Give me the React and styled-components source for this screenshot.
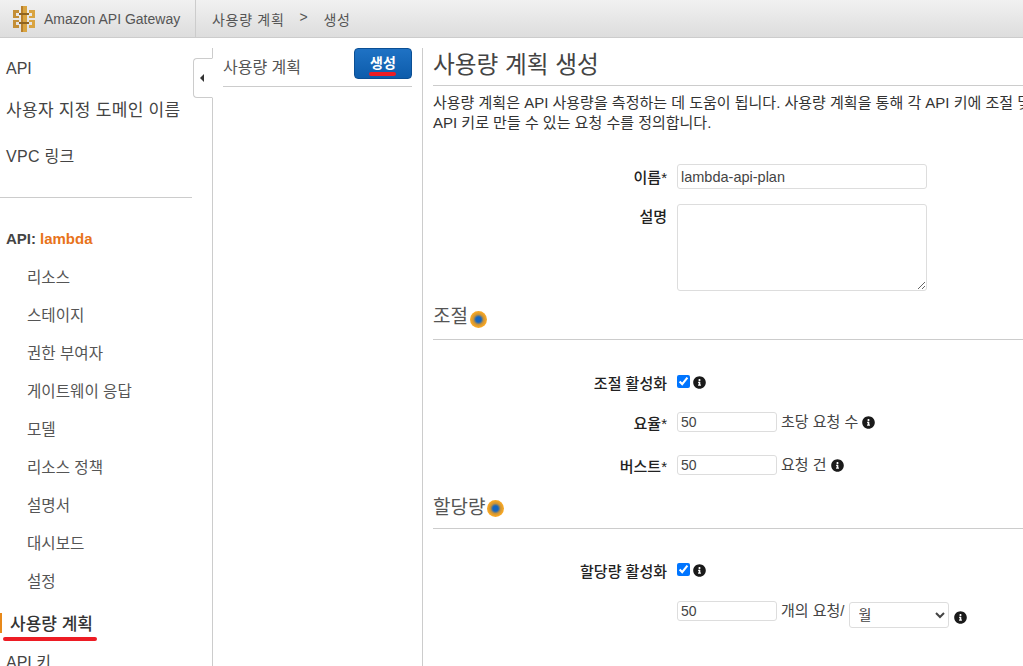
import styled, { createGlobalStyle } from 'styled-components'
import { FaInfoCircle } from 'react-icons/fa'

const GlobalStyle = createGlobalStyle`
html, body {
  margin:0;
  padding:0;
  height:100%;
  overflow:hidden;
  background:#fff;
}
body {
  font-family:"Liberation Sans", "Noto Sans CJK KR", sans-serif;
  color:#444;
}
* { box-sizing:border-box; }
`
const Page = styled.div`
width:1023px;
height:666px;
display:flex;
flex-direction:column;
overflow:hidden;
`
const TopBar = styled.header`
height:38px;
flex:none;
display:flex;
align-items:center;
background:linear-gradient(#f1f1f1, #dddddd);
border-bottom:1px solid #cccccc;
`
const Brand = styled.div`
width:196px;
height:37px;
padding-left:12px;
display:flex;
align-items:center;
gap:8px;
font-size:14px;
color:#555;
border-right:1px solid #cccccc;
`
const Crumbs = styled.div`
padding-left:16px;
display:flex;
gap:15px;
font-size:14px;
letter-spacing:.7px;
color:#555;
`
const Content = styled.div`
flex:1;
display:flex;
padding-top:10px;
min-height:0;
`
const Sidebar = styled.nav`
width:213px;
flex:none;
position:relative;
border-right:1px solid #cccccc;
`
const TopItem = styled.div`
height:${p => p.$h}px;
padding-left:6px;
padding-top:${p => p.$pt || 0}px;
padding-bottom:${p => p.$pb || 0}px;
display:flex;
align-items:center;
font-size:${p => p.$size || 17}px;
letter-spacing:${p => p.$ls || 0}px;
color:#444;
`
const SideRule = styled.hr`
width:192px;
margin:17px 0 21px 0;
border:0;
border-top:1px solid #cccccc;
`
const ApiTitle = styled.div`
height:39px;
padding-left:6px;
display:flex;
align-items:center;
gap:4px;
font-size:15px;
font-weight:bold;
color:#444;
`
const ApiName = styled.span`
color:#e8731a;
`
const SubItem = styled.div`
height:38px;
padding:0 0 2px 27px;
display:flex;
align-items:center;
font-size:15.6px;
color:#555;
`
const ActiveItem = styled.div`
height:38px;
margin-top:4px;
padding:0 0 1px 10px;
display:flex;
align-items:center;
position:relative;
font-size:17px;
font-weight:500;
color:#333;
&:before{
  content:"";
  position:absolute;
  left:0;
  top:9px;
  width:2px;
  height:20px;
  background:#e8891a;
}
`
const RedMark = styled.span`
position:absolute;
left:${p => p.$left}px;
top:${p => p.$top}px;
width:${p => p.$width}px;
height:4px;
border-radius:2px;
background:#ed1c24;
`
const CollapseTab = styled.div`
position:absolute;
right:-1px;
top:10px;
width:20px;
height:40px;
display:flex;
align-items:center;
padding-left:6px;
background:#fff;
border:1px solid #cccccc;
border-right:1px solid #fff;
border-radius:4px 0 0 4px;
`
const Arrow = styled.span`
width:0;
height:0;
border-top:4px solid transparent;
border-bottom:4px solid transparent;
border-right:4px solid #333;
`
const MiddlePanel = styled.section`
width:210px;
flex:none;
padding:0 10px;
border-right:1px solid #cccccc;
`
const MiddleHead = styled.div`
height:39px;
display:flex;
justify-content:space-between;
align-items:flex-start;
border-bottom:1px solid #cccccc;
font-size:16px;
color:#555;
`
const MiddleTitle = styled.span`
line-height:39px;
`
const CreateButton = styled.button`
width:58px;
height:31px;
position:relative;
padding:0 0 3px 0;
font:bold 14px "Liberation Sans", "Noto Sans CJK KR", sans-serif;
color:#fff;
background:linear-gradient(#1f72c4, #0d5cab);
border:1px solid #0b4f94;
border-radius:4px;
`
const MainPanel = styled.main`
flex:1;
min-width:0;
padding-left:10px;
`
const PageTitle = styled.h1`
height:38px;
margin:0;
font-size:23.7px;
font-weight:normal;
line-height:35px;
color:#444;
border-bottom:1px solid #cccccc;
`
const Intro = styled.p`
margin:6px 0 0 0;
padding-top:1px;
height:40px;
font-size:15px;
line-height:20px;
white-space:nowrap;
color:#333;
`
const Row = styled.div`
display:flex;
align-items:${p => p.$align || 'center'};
margin-top:${p => p.$mt}px;
height:${p => p.$h}px;
`
const Label = styled.label`
width:234px;
margin-right:10px;
flex:none;
text-align:right;
font-size:15px;
font-weight:500;
color:#222;
`
const TopLabel = styled(Label)`
padding-top:1px;
`
const Required = styled.span`
font-weight:normal;
`
const NameInput = styled.input`
width:250px;
height:25px;
padding:0 3px;
font:14.5px "Liberation Sans", "Noto Sans CJK KR", sans-serif;
color:#444;
border:1px solid #dddddd;
border-radius:3px;
`
const DescArea = styled.textarea`
width:250px;
height:87px;
border:1px solid #dddddd;
border-radius:3px;
`
const NumberBox = styled.input`
width:100px;
height:20px;
padding:0 3px;
font:14px "Liberation Sans", "Noto Sans CJK KR", sans-serif;
color:#444;
border:1px solid #dddddd;
border-radius:3px;
`
const Unit = styled.span`
margin-left:4px;
font-size:15px;
line-height:20px;
color:#444;
`
const Check = styled.input`
width:13px;
height:13px;
margin:0 3px 2px 0;
`
const InfoIcon = styled(FaInfoCircle)`
width:13px;
height:13px;
flex:none;
margin-left:${p => p.$ml || 0}px;
margin-top:${p => p.$mt || 0}px;
color:#1a1a1a;
`
const SectionHead = styled.h2`
display:flex;
align-items:center;
height:${p => p.$h}px;
margin:${p => p.$mt}px 0 0 0;
padding-bottom:${p => p.$pb}px;
font-size:19px;
font-weight:normal;
color:#555;
border-bottom:1px solid #cccccc;
`
const Pulse = styled.span`
width:17px;
height:17px;
margin:${p => p.$top}px 0 0 2px;
border-radius:50%;
background:radial-gradient(circle, #1565c0 0, #1565c0 22%, #c8923a 42%, #f5a623 62%, #f9b040 88%, rgba(249,176,64,.4) 100%);
`
const PeriodSelect = styled.select`
width:100px;
height:26px;
margin:1px 0 0 4px;
padding-left:5px;
font:14px "Liberation Sans", "Noto Sans CJK KR", sans-serif;
color:#444;
background:#fff;
border:1px solid #dddddd;
border-radius:3px;
`

const menu = ['리소스', '스테이지', '권한 부여자', '게이트웨이 응답', '모델', '리소스 정책', '설명서', '대시보드', '설정']

function GatewayLogo() {
    return (
        <svg width="24" height="26" viewBox="0 0 24 26">
            <rect x="9" y="0" width="6" height="26" fill="#b9802c" />
            <rect x="11" y="0" width="4" height="26" fill="#d9a441" />
            <path d="M1 5h6v3H4v3h3v2H1zM1 15h6v2H4v3h3v3H1z" fill="#c48f37" transform="translate(0 -1)" />
            <path d="M23 5h-6v3h3v3h-3v2h6zM23 15h-6v2h3v3h-3v3h6z" fill="#d9a441" transform="translate(0 -1)" />
            <rect x="7" y="7" width="10" height="2" fill="#8f6420" />
            <rect x="7" y="16" width="10" height="2" fill="#8f6420" />
        </svg>
    )
}

function App() {
    return (
        <Page>
            <GlobalStyle />
            <TopBar>
                <Brand><GatewayLogo />Amazon API Gateway</Brand>
                <Crumbs>
                    <span>사용량 계획</span>
                    <span>&gt;</span>
                    <span>생성</span>
                </Crumbs>
            </TopBar>
            <Content>
                <Sidebar>
                    <TopItem $h={40} $size={16} $pt={2}>API</TopItem>
                    <TopItem $h={44} $ls={.3} $pb={4}>사용자 지정 도메인 이름</TopItem>
                    <TopItem $h={48} $size={16} $ls={.3} $pb={2}>VPC 링크</TopItem>
                    <SideRule />
                    <ApiTitle>API: <ApiName>lambda</ApiName></ApiTitle>
                    {menu.map(m => <SubItem key={m}>{m}</SubItem>)}
                    <ActiveItem>사용량 계획<RedMark $left={3} $top={33} $width={94} /></ActiveItem>
                    <TopItem $h={38} $size={16}>API 키</TopItem>
                    <CollapseTab><Arrow /></CollapseTab>
                </Sidebar>
                <MiddlePanel>
                    <MiddleHead>
                        <MiddleTitle>사용량 계획</MiddleTitle>
                        <CreateButton>생성<RedMark $left={14} $top={23} $width={27} /></CreateButton>
                    </MiddleHead>
                </MiddlePanel>
                <MainPanel>
                    <PageTitle>사용량 계획 생성</PageTitle>
                    <Intro>
                        사용량 계획은 API 사용량을 측정하는 데 도움이 됩니다. 사용량 계획을 통해 각 API 키에 조절 및 할당량 제한을 설정할 수 있습니다.<br />
                        API 키로 만들 수 있는 요청 수를 정의합니다.
                    </Intro>
                    <Row $mt={32} $h={25}>
                        <Label>이름<Required>*</Required></Label>
                        <NameInput defaultValue="lambda-api-plan" />
                    </Row>
                    <Row $mt={15} $h={87} $align="flex-start">
                        <TopLabel>설명</TopLabel>
                        <DescArea />
                    </Row>
                    <SectionHead $mt={9} $h={40} $pb={10}>조절<Pulse $top={9} /></SectionHead>
                    <Row $mt={35} $h={14}>
                        <Label>조절 활성화</Label>
                        <Check type="checkbox" defaultChecked readOnly />
                        <InfoIcon />
                    </Row>
                    <Row $mt={23} $h={20}>
                        <Label>요율<Required>*</Required></Label>
                        <NumberBox defaultValue="50" />
                        <Unit>초당 요청 수</Unit>
                        <InfoIcon $ml={4} />
                    </Row>
                    <Row $mt={23} $h={20}>
                        <Label>버스트<Required>*</Required></Label>
                        <NumberBox defaultValue="50" />
                        <Unit>요청 건</Unit>
                        <InfoIcon $ml={4} />
                    </Row>
                    <SectionHead $mt={15} $h={39} $pb={7}>할당량<Pulse $top={6} /></SectionHead>
                    <Row $mt={34} $h={14}>
                        <Label>할당량 활성화</Label>
                        <Check type="checkbox" defaultChecked readOnly />
                        <InfoIcon />
                    </Row>
                    <Row $mt={24} $h={28} $align="flex-start">
                        <Label />
                        <NumberBox defaultValue="50" />
                        <Unit>개의 요청/</Unit>
                        <PeriodSelect defaultValue="월">
                            <option>일</option>
                            <option>주</option>
                            <option>월</option>
                        </PeriodSelect>
                        <InfoIcon $ml={5} $mt={10} />
                    </Row>
                </MainPanel>
            </Content>
        </Page>
    )
}

export default App
